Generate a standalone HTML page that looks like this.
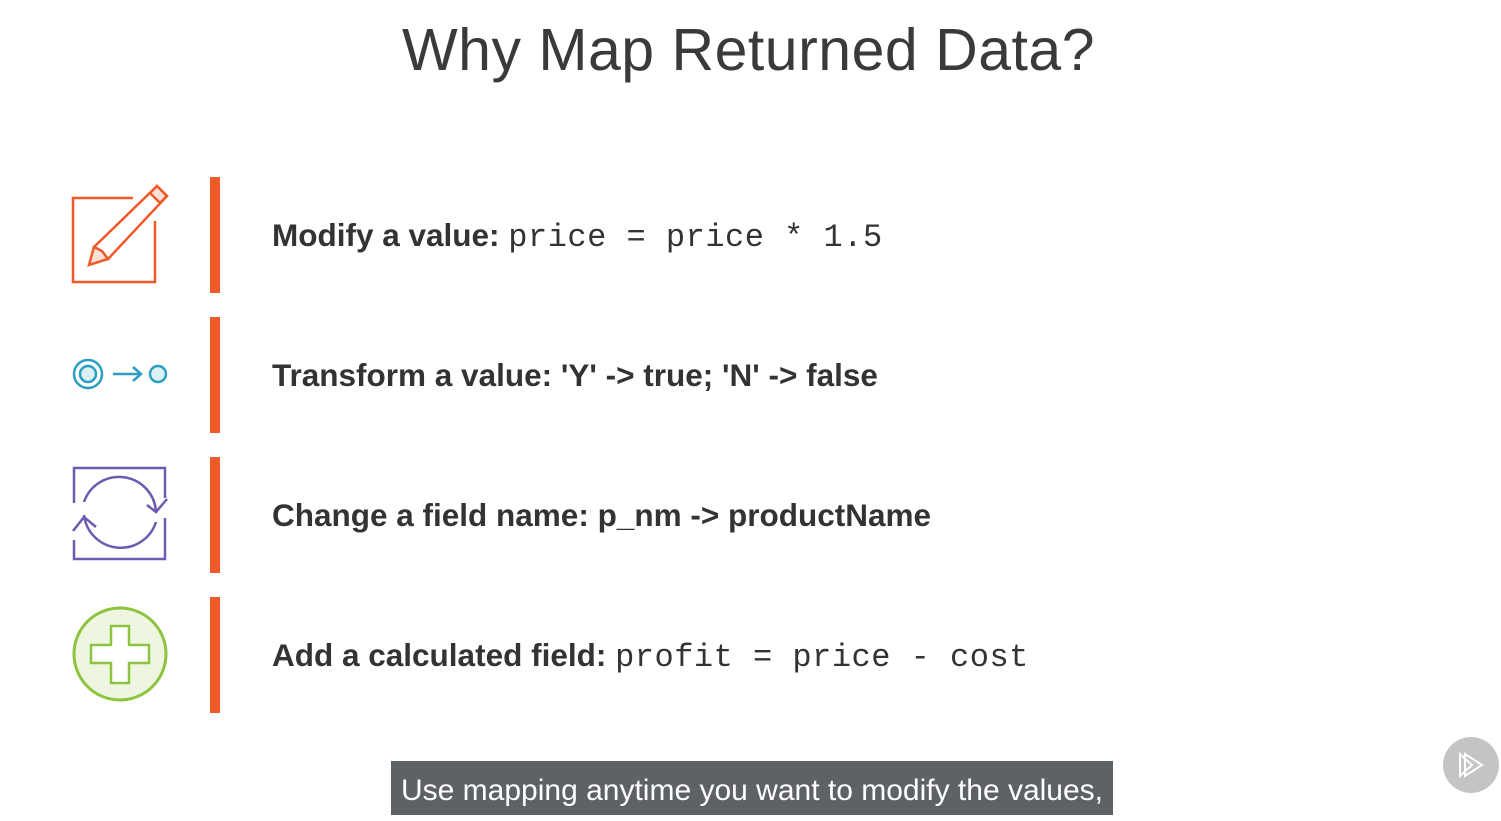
<!DOCTYPE html>
<html><head><meta charset="utf-8"><style>
body{margin:0;width:1501px;height:815px;background:#fff;position:relative;overflow:hidden;font-family:"Liberation Sans",sans-serif;color:#333}
.title{position:absolute;left:0;width:1497px;top:16px;text-align:center;font-size:59px;color:#3a3a3a;letter-spacing:0.5px}
.bar{position:absolute;left:210px;width:10px;height:116px;background:#f05a28}
.row{position:absolute;left:272px;font-size:31.5px;font-weight:bold;color:#333;white-space:nowrap;line-height:40px}
.mono{font-family:"Liberation Mono",monospace;font-weight:normal;font-size:32px;letter-spacing:0.5px}
.cap{position:absolute;left:391px;top:761px;width:722px;height:54px;background:#5e6266;color:#fff;font-size:30px;line-height:60px;text-align:center;white-space:nowrap}
svg{position:absolute}
</style></head><body>
<div class="title">Why Map Returned Data?</div>
<div class="bar" style="top:177px"></div>
<div class="bar" style="top:317px"></div>
<div class="bar" style="top:457px"></div>
<div class="bar" style="top:597px"></div>
<div class="row" style="top:215px">Modify a value: <span class="mono">price = price * 1.5</span></div>
<div class="row" style="top:355px">Transform a value: 'Y' -&gt; true; 'N' -&gt; false</div>
<div class="row" style="top:495px">Change a field name: p_nm -&gt; productName</div>
<div class="row" style="top:635px">Add a calculated field: <span class="mono">profit = price - cost</span></div>

<svg style="left:60px;top:170px" width="120" height="130" viewBox="60 170 120 130">
<g fill="none" stroke="#f05a28" stroke-width="2.5">
<path d="M133 198H73V282H155V221"/>
<path d="M150 193L157 186L167 196L160 203Z" fill="#fde0d6"/>
<path d="M94 247L157 186L167 196L108 259Z"/>
<path d="M94 247L102 251L108 259L89 265Z" fill="#fde0d6"/>
</g></svg>

<svg style="left:60px;top:350px" width="120" height="50" viewBox="60 350 120 50">
<g fill="none" stroke="#2a9fc0" stroke-width="2.5">
<circle cx="88" cy="374" r="14"/>
<circle cx="88" cy="374" r="8" fill="#ddf0f6"/>
<path d="M113 374H141M133 367L141 374L133 381"/>
<circle cx="158" cy="374" r="8" fill="#ddf0f6"/>
</g></svg>

<svg style="left:60px;top:455px" width="120" height="120" viewBox="60 455 120 120">
<g fill="none" stroke="#6e5bb0" stroke-width="2.5">
<path d="M74 503V468H165V498M165 518V559H74V540"/>
<path d="M84 502A37 37 0 0 1 156 512" />
<path d="M147 505L156 512L167 499"/>
<path d="M156 522A37 37 0 0 1 84 515"/>
<path d="M73 531L84 517L96 527"/>
</g></svg>

<svg style="left:60px;top:595px" width="120" height="120" viewBox="60 595 120 120">
<circle cx="120" cy="654" r="46" fill="#eef6e2" stroke="#8cc43f" stroke-width="3"/>
<path d="M111 626H129V645H149V663H129V683H111V663H91V645H111Z" fill="#fff" stroke="#8cc43f" stroke-width="2.5"/>
</svg>

<div class="cap">Use mapping anytime you want to modify the values,</div>

<svg style="left:1442px;top:736px" width="58" height="58" viewBox="0 0 58 58">
<circle cx="29" cy="29" r="28" fill="#c4c4c4"/>
<g fill="none" stroke="#fff" stroke-width="2"><path d="M18 18V40L30 29Z"/><path d="M23 18V40L40 29Z"/></g>
</svg>
</body></html>
